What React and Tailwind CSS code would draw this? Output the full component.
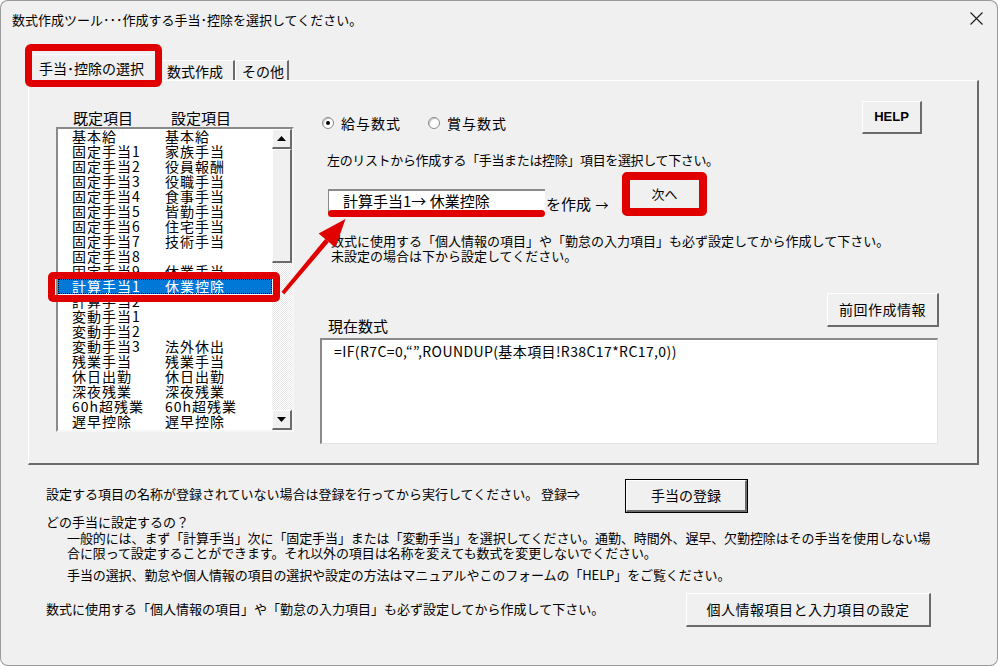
import React from 'react';

// 既定項目 / 設定項目 の一覧
const items = [
  ['基本給', '基本給'],
  ['固定手当1', '家族手当'],
  ['固定手当2', '役員報酬'],
  ['固定手当3', '役職手当'],
  ['固定手当4', '食事手当'],
  ['固定手当5', '皆勤手当'],
  ['固定手当6', '住宅手当'],
  ['固定手当7', '技術手当'],
  ['固定手当8', ''],
  ['固定手当9', '休業手当'],
  ['計算手当1', '休業控除'],
  ['計算手当2', ''],
  ['変動手当1', ''],
  ['変動手当2', ''],
  ['変動手当3', '法外休出'],
  ['残業手当', '残業手当'],
  ['休日出勤', '休日出勤'],
  ['深夜残業', '深夜残業'],
  ['60h超残業', '60h超残業'],
  ['遅早控除', '遅早控除'],
];
const SELECTED = 10;

function Button3D({ className = '', children }) {
  return (
    <div
      className={`flex items-center justify-center bg-[#f0f0f0] border-t border-l border-t-white border-l-white border-r-2 border-b-2 border-r-[#6b6b6b] border-b-[#6b6b6b] ${className}`}
    >
      {children}
    </div>
  );
}

function ScrollArrow({ down }) {
  return (
    <svg width="9" height="5" viewBox="0 0 9 5">
      {down ? <polygon points="0,0 9,0 4.5,5" fill="#000" /> : <polygon points="0,5 9,5 4.5,0" fill="#000" />}
    </svg>
  );
}

function Radio({ checked, label }) {
  return (
    <div className="flex items-center">
      <div className="w-[12px] h-[12px] rounded-full border border-[#8a8a8a] bg-white flex items-center justify-center shadow-[inset_1px_1px_0_#c8c8c8]">
        {checked && <div className="w-[4px] h-[4px] rounded-full bg-black" />}
      </div>
      <span className="ml-[7px] text-[14px] leading-[16px] tracking-[1px]">{label}</span>
    </div>
  );
}

function ListBox() {
  return (
    <div className="flex w-[238px] h-[305px] border-2 border-t-[#8a8a8a] border-l-[#8a8a8a] border-r-[#f6f6f6] border-b-[#f6f6f6] bg-white">
      <div className="w-[214px] text-[14px] leading-[15px] tracking-[1px]">
        {items.map(([a, b], i) => (
          <div
            key={i}
            className={`flex h-[15px] pl-[14px] whitespace-nowrap ${
              i === SELECTED ? 'bg-[#0078d7] text-white outline-1 outline-dotted outline-black -outline-offset-1' : ''
            }`}
          >
            <span className="w-[93px]">{a}</span>
            <span>{b}</span>
          </div>
        ))}
      </div>
      <div className="w-[20px] flex flex-col bg-[repeating-conic-gradient(#e6e6e6_0_25%,#ffffff_0_50%)] bg-[length:2px_2px]">
        <Button3D className="h-[20px]">
          <ScrollArrow />
        </Button3D>
        <Button3D className="h-[114px]" />
        <div className="flex-1" />
        <Button3D className="h-[20px]">
          <ScrollArrow down />
        </Button3D>
      </div>
    </div>
  );
}

export default function App() {
  return (
    <div className="relative w-[998px] h-[666px] overflow-hidden rounded-[8px] bg-[#f0f0f0] text-black shadow-[inset_0_0_0_1px_#9a9a9a] font-['Noto_Sans_CJK_JP','Liberation_Sans',sans-serif]">
      {/* タイトルバー */}
      <div className="h-[38px] flex items-center justify-between pl-[12px] pr-[15px]">
        <span className="text-[13px] leading-[16px] mt-[2px]">数式作成ツール･･･作成する手当･控除を選択してください。</span>
        <svg width="13" height="13" viewBox="0 0 13 13" className="mb-[1px]">
          <path d="M0.5 0.5 L12.5 12.5 M12.5 0.5 L0.5 12.5" stroke="#1a1a1a" strokeWidth="1.1" />
        </svg>
      </div>

      {/* タブ */}
      <div className="h-[42px] flex items-end pl-[30px]">
        <div className="w-[130px] h-[26px] flex items-center pl-[8px] text-[14px] leading-[16px] bg-[#f0f0f0] border-t border-l border-white">
          手当･控除の選択
        </div>
        <div className="w-[75px] h-[20px] pl-[7px] text-[14px] leading-[20px] border-t border-t-white border-r-2 border-r-[#6b6b6b]">
          数式作成
        </div>
        <div className="w-[54px] h-[20px] pl-[6px] text-[14px] leading-[20px] border-t border-l border-t-white border-l-white border-r-2 border-r-[#6b6b6b]">
          その他
        </div>
      </div>

      {/* タブページ */}
      <div className="ml-[28px] w-[951px] h-[385px] border-t border-l border-t-white border-l-white border-r-2 border-b-2 border-r-[#6b6b6b] border-b-[#6b6b6b] flex pl-[27px] pt-[20px]">
        <div className="w-[238px] pt-[7px]">
          <div className="flex h-[19px] pl-[17px] text-[15px] leading-[19px]">
            <span className="w-[98px]">既定項目</span>
            <span>設定項目</span>
          </div>
          <ListBox />
        </div>

        <div className="ml-[26px] w-[619px] flex flex-col">
          <div className="flex justify-between items-start h-[33px]">
            <div className="flex items-center pt-[14px] pl-[2px] gap-[27px]">
              <Radio checked label="給与数式" />
              <Radio label="賞与数式" />
            </div>
            <Button3D className="w-[60px] h-[33px] mr-[17px] font-['Liberation_Sans',sans-serif] font-bold text-[13px]">
              HELP
            </Button3D>
          </div>

          <div className="mt-[18px] pl-[7px] text-[13px] leading-[16px] tracking-[-0.35px] whitespace-nowrap">
            左のリストから作成する「手当または控除」項目を選択して下さい。
          </div>

          <div className="mt-[4px] flex items-start">
            <div className="relative ml-[8px] mt-[17px] w-[217px] h-[24px] bg-white border-t-2 border-l border-t-[#8a8a8a] border-l-[#8a8a8a] pl-[14px] text-[15px] leading-[20px] whitespace-nowrap">
              計算手当1→ 休業控除
              <div className="absolute -left-[1px] -right-0 -bottom-[4px] h-[7px] rounded-full bg-[#e00000]" />
            </div>
            <span className="w-[77px] pl-[1px] mt-[22px] text-[15px] leading-[20px] whitespace-nowrap">
              を作成 <span className="ml-[1px] text-[13px]">→</span>
            </span>
            <div className="w-[85px] h-[44px] border-[8px] border-[#e00000] rounded-[5px] bg-[#f0f0f0] flex items-center justify-center text-[13px] leading-[16px]">
              次へ
            </div>
          </div>

          <div className="mt-[17px] pl-[11px] text-[13px] leading-[15px] whitespace-nowrap">
            <div>数式に使用する「個人情報の項目」や「勤怠の入力項目」も必ず設定してから作成して下さい。</div>
            <div>未設定の場合は下から設定してください。</div>
          </div>

          <div className="mt-[30px] flex justify-between items-start">
            <span className="ml-[8px] mt-[24px] text-[15px] leading-[18px]">現在数式</span>
            <Button3D className="w-[112px] h-[34px] text-[14px] tracking-[0.5px]">前回作成情報</Button3D>
          </div>

          <div className="mt-[3px] w-[618px] h-[106px] bg-white border-t-2 border-l-2 border-r border-b border-t-[#8a8a8a] border-l-[#8a8a8a] border-r-[#e3e3e3] border-b-[#e3e3e3] pl-[12px] pt-[3px] text-[14px] leading-[16px] tracking-[0.4px] whitespace-nowrap">
            =IF(R7C=0,“”,ROUNDUP(基本項目!R38C17*RC17,0))
          </div>
        </div>
      </div>

      {/* 下部の説明と操作 */}
      <div className="pl-[46px] text-[13px] whitespace-nowrap">
        <div className="mt-[14px] flex items-start">
          <span className="w-[579px] mt-[7px] leading-[16px]">
            設定する項目の名称が登録されていない場合は登録を行ってから実行してください。 登録⇒
          </span>
          <div className="border border-black">
            <Button3D className="w-[121px] h-[32px] text-[14px]">手当の登録</Button3D>
          </div>
        </div>
        <div className="mt-[1px] leading-[16px]">どの手当に設定するの？</div>
        <div className="pl-[21px] leading-[15px] tracking-[-0.1px]">
          <div>一般的には、まず「計算手当」次に「固定手当」または「変動手当」を選択してください。通勤、時間外、遅早、欠勤控除はその手当を使用しない場</div>
          <div>合に限って設定することができます。それ以外の項目は名称を変えても数式を変更しないでください。</div>
          <div className="mt-[7px] leading-[16px]">手当の選択、勤怠や個人情報の項目の選択や設定の方法はマニュアルやこのフォームの「HELP」をご覧ください。</div>
        </div>
        <div className="mt-[10px] flex items-start">
          <span className="w-[640px] mt-[8px] leading-[16px]">
            数式に使用する「個人情報の項目」や「勤怠の入力項目」も必ず設定してから作成して下さい。
          </span>
          <Button3D className="w-[245px] h-[34px] text-[14px] tracking-[0.5px]">個人情報項目と入力項目の設定</Button3D>
        </div>
      </div>

      {/* 赤枠の注記 */}
      <div className="absolute left-[25px] top-[44px] w-[137px] h-[43px] border-[7px] border-[#e00000] rounded-[6px]" />
      <div className="absolute left-[48px] top-[272px] w-[232px] h-[30px] border-[7px] border-[#e00000] rounded-[5px]" />
      <svg className="absolute left-0 top-0 pointer-events-none" width="998" height="666" viewBox="0 0 998 666">
        <polygon points="284.2,294.5 281.6,291.8 325.1,238.9 328.9,242.1" fill="#e00000" />
        <polygon points="345.5,219 318.6,233.4 335.4,247.6" fill="#e00000" />
      </svg>
    </div>
  );
}
